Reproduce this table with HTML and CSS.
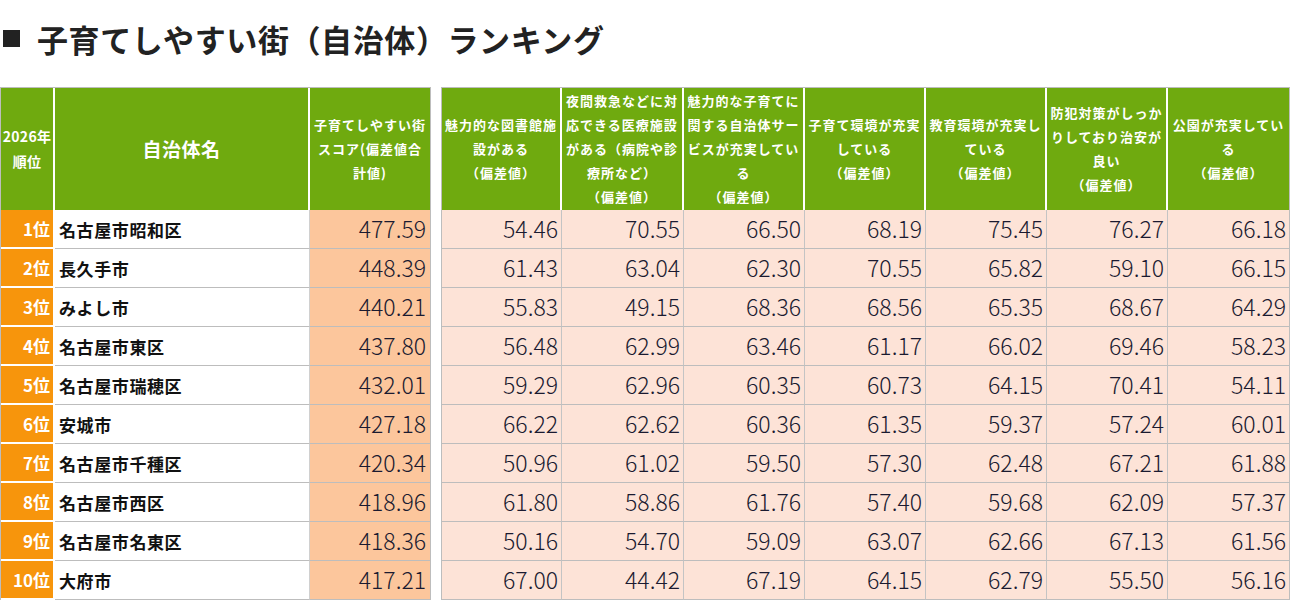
FILE: index.html
```html
<!DOCTYPE html>
<html lang="ja">
<head>
<meta charset="utf-8">
<title>子育てしやすい街（自治体）ランキング</title>
<link rel="stylesheet" href="styles.css">
</head>
<body>
<h1 class="title"><span class="sq"></span><span class="title-text">子育てしやすい街（自治体）ランキング</span></h1>
<div class="tables">
  <div class="grid left">
    <div class="h rank-h">2026年<br>順位</div>
    <div class="h name-h">自治体名</div>
    <div class="h">子育てしやすい街<br>スコア(偏差値合<br>計値)</div>

    <div class="rank">1位</div><div class="name">名古屋市昭和区</div><div class="score">477.59</div>
    <div class="rank">2位</div><div class="name">長久手市</div><div class="score">448.39</div>
    <div class="rank">3位</div><div class="name">みよし市</div><div class="score">440.21</div>
    <div class="rank">4位</div><div class="name">名古屋市東区</div><div class="score">437.80</div>
    <div class="rank">5位</div><div class="name">名古屋市瑞穂区</div><div class="score">432.01</div>
    <div class="rank">6位</div><div class="name">安城市</div><div class="score">427.18</div>
    <div class="rank">7位</div><div class="name">名古屋市千種区</div><div class="score">420.34</div>
    <div class="rank">8位</div><div class="name">名古屋市西区</div><div class="score">418.96</div>
    <div class="rank">9位</div><div class="name">名古屋市名東区</div><div class="score">418.36</div>
    <div class="rank">10位</div><div class="name">大府市</div><div class="score">417.21</div>
  </div>

  <div class="grid right">
    <div class="h">魅力的な図書館施<br>設がある<br>（偏差値）</div>
    <div class="h">夜間救急などに対<br>応できる医療施設<br>がある（病院や診<br>療所など）<br>（偏差値）</div>
    <div class="h">魅力的な子育てに<br>関する自治体サー<br>ビスが充実してい<br>る<br>（偏差値）</div>
    <div class="h">子育て環境が充実<br>している<br>（偏差値）</div>
    <div class="h">教育環境が充実し<br>ている<br>（偏差値）</div>
    <div class="h">防犯対策がしっか<br>りしており治安が<br>良い<br>（偏差値）</div>
    <div class="h">公園が充実してい<br>る<br>（偏差値）</div>

    <div class="v">54.46</div><div class="v">70.55</div><div class="v">66.50</div><div class="v">68.19</div><div class="v">75.45</div><div class="v">76.27</div><div class="v">66.18</div>
    <div class="v">61.43</div><div class="v">63.04</div><div class="v">62.30</div><div class="v">70.55</div><div class="v">65.82</div><div class="v">59.10</div><div class="v">66.15</div>
    <div class="v">55.83</div><div class="v">49.15</div><div class="v">68.36</div><div class="v">68.56</div><div class="v">65.35</div><div class="v">68.67</div><div class="v">64.29</div>
    <div class="v">56.48</div><div class="v">62.99</div><div class="v">63.46</div><div class="v">61.17</div><div class="v">66.02</div><div class="v">69.46</div><div class="v">58.23</div>
    <div class="v">59.29</div><div class="v">62.96</div><div class="v">60.35</div><div class="v">60.73</div><div class="v">64.15</div><div class="v">70.41</div><div class="v">54.11</div>
    <div class="v">66.22</div><div class="v">62.62</div><div class="v">60.36</div><div class="v">61.35</div><div class="v">59.37</div><div class="v">57.24</div><div class="v">60.01</div>
    <div class="v">50.96</div><div class="v">61.02</div><div class="v">59.50</div><div class="v">57.30</div><div class="v">62.48</div><div class="v">67.21</div><div class="v">61.88</div>
    <div class="v">61.80</div><div class="v">58.86</div><div class="v">61.76</div><div class="v">57.40</div><div class="v">59.68</div><div class="v">62.09</div><div class="v">57.37</div>
    <div class="v">50.16</div><div class="v">54.70</div><div class="v">59.09</div><div class="v">63.07</div><div class="v">62.66</div><div class="v">67.13</div><div class="v">61.56</div>
    <div class="v">67.00</div><div class="v">44.42</div><div class="v">67.19</div><div class="v">64.15</div><div class="v">62.79</div><div class="v">55.50</div><div class="v">56.16</div>
  </div>
</div>
</body>
</html>
```

FILE: styles.css
```css
html, body {
  margin: 0;
  padding: 0;
  background: #ffffff;
}

body {
  font-family: "Noto Sans CJK JP", "Noto Sans", sans-serif;
  color: #1e1e1e;
  width: 1290px;
  height: 600px;
  overflow: hidden;
}

.title {
  margin: 0;
  height: 76px;
  padding-bottom: 11px;
  display: flex;
  align-items: center;
  font-size: 31px;
  font-weight: 700;
  color: #222222;
  letter-spacing: 0.6px;
}

.sq {
  display: inline-block;
  width: 17px;
  height: 17px;
  background: #222222;
  margin-left: 3px;
  margin-right: 17px;
  flex: none;
}

.title-text {
  line-height: 1;
}

.tables {
  display: flex;
  align-items: flex-start;
}

.grid {
  display: grid;
  grid-template-rows: 122px repeat(10, 39px);
  border-top: 1px solid #bdbdbd;
  border-left: 1px solid #bdbdbd;
}

.left {
  grid-template-columns: 54px 255px 121px;
}

.right {
  margin-left: 10px;
  grid-template-columns: 120px 122px 121px 121px 121px 121px 121px;
  border-right: 1px solid #bdbdbd;
}

.grid > div {
  box-sizing: border-box;
  display: flex;
  align-items: center;
  min-width: 0;
}

.h {
  background: #6faa0f;
  color: #ffffff;
  font-weight: 700;
  font-size: 13px;
  line-height: 24px;
  letter-spacing: 1px;
  text-align: center;
  justify-content: center;
  border-right: 2px solid #ffffff;
  white-space: nowrap;
}

.right .h:nth-child(7) {
  border-right: none;
}

.left .h:nth-child(3) {
  border-right: 1px solid #bdbdbd;
}

.rank-h {
  font-size: 14px;
  letter-spacing: 0.3px;
  line-height: 25px;
}

.name-h {
  font-size: 19px;
  letter-spacing: 0.5px;
}

.rank {
  background: #f7950c;
  color: #ffffff;
  font-weight: 700;
  font-size: 17px;
  justify-content: flex-end;
  padding-right: 3px;
  border-right: 2px solid #ffffff;
  border-bottom: 2px solid #ffffff;
}

.name {
  background: #ffffff;
  color: #111111;
  font-weight: 700;
  font-size: 17px;
  letter-spacing: 0.6px;
  padding-left: 4px;
  border-right: 1px solid #d0d0d0;
  border-bottom: 1px solid #bdbdbd;
}

.score,
.v {
  font-size: 23px;
  font-weight: 300;
  color: #1a1a30;
  justify-content: flex-end;
  padding-bottom: 3px;
  border-bottom: 1px solid #bdbdbd;
}

.score {
  background: #fcc69c;
  padding-right: 4px;
  border-right: 1px solid #bdbdbd;
}

.v {
  background: #fde3d7;
  padding-right: 3px;
  border-right: 1px solid #c4c4c4;
}

.right .v:nth-child(7n) {
  border-right: none;
}
```
